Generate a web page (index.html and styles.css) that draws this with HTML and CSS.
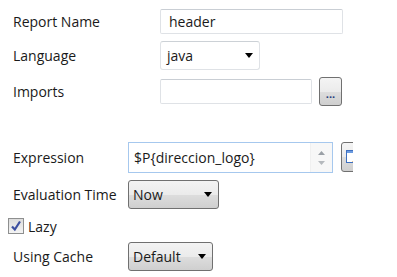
FILE: index.html
```html
<html>
<head>
  <link rel="stylesheet" href="styles.css">
</head>
<body>
  <div id="panel">
    <div class="group" id="report-group">
      <div class="row row-text">
        <span class="label">Report Name</span>
        <div class="text-box name-box">header</div>
      </div>
      <div class="row row-combo">
        <span class="label">Language</span>
        <div class="combo white-combo lang-combo"><span>java</span><span class="arrow"></span></div>
      </div>
      <div class="row row-combo">
        <span class="label">Imports</span>
        <div class="text-box imports-box"></div>
        <div class="dots-button">...</div>
      </div>
    </div>

    <div class="group" id="image-group">
      <div class="row row-expr">
        <span class="label">Expression</span>
        <div class="expr-box">
          <span class="expr-text">$P{direccion_logo}</span>
          <span class="spinner">
            <svg width="9" height="22" viewBox="0 0 9 22">
              <path d="M1 8 L4.5 4 L8 8 Z" fill="#9aa0a6"/>
              <path d="M1 14 L4.5 18 L8 14 Z" fill="#b5b9bd"/>
            </svg>
          </span>
        </div>
        <div class="clip">
          <div class="expr-button">
            <svg width="20" height="22" viewBox="0 0 20 22">
              <rect x="3.5" y="4.5" width="12" height="12" fill="#fff" stroke="#3d6fc0"/>
              <rect x="4" y="5" width="11" height="2" fill="#6c9be0"/>
              <path d="M9 15 L12 18 L14 15 Z" fill="#d9932c"/>
            </svg>
          </div>
        </div>
      </div>
      <div class="row row-combo">
        <span class="label">Evaluation Time</span>
        <div class="combo gray-combo now-combo"><span>Now</span><span class="arrow"></span></div>
      </div>
      <div class="row row-check">
        <span class="checkbox">
          <svg width="12" height="12" viewBox="0 0 12 12">
            <path d="M2 6.5 L4.8 9.5 L10 1.5" fill="none" stroke="#3c4fa0" stroke-width="2.2"/>
          </svg>
        </span>
        <span class="check-label">Lazy</span>
      </div>
      <div class="row row-combo">
        <span class="label">Using Cache</span>
        <div class="combo gray-combo cache-combo"><span>Default</span><span class="arrow"></span></div>
      </div>
    </div>
  </div>
</body>
</html>
```

FILE: styles.css
```css
body {
  margin: 0;
  padding: 0;
  background-color: #ffffff;
  font-family: "Open Sans", "Noto Sans", sans-serif;
  font-size: 14px;
  color: #1a1a1a;
  overflow: hidden;
}

#panel {
  width: 397px;
  height: 277px;
  overflow: hidden;
}

.group {
  display: flex;
  flex-direction: column;
  padding-left: 13px;
}

#report-group {
  padding-top: 9px;
  gap: 7px;
}

#report-group .label {
  width: 147px;
}

#image-group {
  margin-top: 36px;
  gap: 7px;
}

#image-group .label {
  width: 115px;
}

.row {
  display: flex;
  align-items: center;
}

.row-text {
  height: 25px;
}

.row-combo {
  height: 29px;
}

.row-expr {
  height: 31px;
}

.row-check {
  height: 18px;
  margin-top: 1px;
}

.label {
  flex-shrink: 0;
  white-space: nowrap;
}

.text-box {
  box-sizing: border-box;
  height: 25px;
  border: 1px solid #dfe2e6;
  border-top-color: #c9ced4;
  border-radius: 2px;
  padding: 0 8px;
  line-height: 23px;
}

.name-box {
  width: 183px;
}

.imports-box {
  width: 152px;
}

.dots-button {
  box-sizing: border-box;
  width: 23px;
  height: 29px;
  margin-left: 7px;
  border: 1px solid #707070;
  border-radius: 3px;
  background: linear-gradient(#f4f4f4, #ebebeb 50%, #dddddd 51%, #cfcfcf);
  color: #233a7a;
  font-size: 11px;
  font-weight: bold;
  line-height: 18px;
  text-align: center;
  padding-top: 7px;
}

.combo {
  box-sizing: border-box;
  height: 29px;
  display: flex;
  align-items: center;
  justify-content: space-between;
  padding: 0 5px 0 6px;
  border-radius: 3px;
}

.white-combo {
  border: 1px solid #dfe2e6;
  border-top-color: #ccd1d6;
  background-color: #ffffff;
}

.gray-combo {
  border: 1px solid #707070;
  background: linear-gradient(#f3f3f3, #ebebeb 50%, #dddddd 51%, #cfcfcf);
  padding-left: 4px;
}

.lang-combo {
  width: 100px;
}

.now-combo {
  width: 91px;
}

.cache-combo {
  width: 85px;
}

.arrow {
  width: 0;
  height: 0;
  border-left: 4px solid transparent;
  border-right: 4px solid transparent;
  border-top: 5px solid #000000;
  margin-right: 1px;
}

.expr-box {
  box-sizing: border-box;
  width: 205px;
  height: 31px;
  display: flex;
  align-items: center;
  justify-content: space-between;
  border: 1px solid #a6c8ee;
  padding-left: 5px;
}

.spinner {
  display: flex;
  align-items: center;
  height: 29px;
  width: 21px;
  justify-content: center;
  border-left: 1px solid #f0f0f0;
  background-color: #f7f7f7;
}

.clip {
  width: 12px;
  height: 31px;
  margin-left: 8px;
  overflow: hidden;
}

.expr-button {
  box-sizing: border-box;
  width: 26px;
  height: 30px;
  border: 1px solid #707070;
  border-radius: 3px;
  background: linear-gradient(#f4f4f4, #ebebeb 50%, #dddddd 51%, #cfcfcf);
  padding: 3px 0 0 1px;
}

.checkbox {
  box-sizing: border-box;
  width: 16px;
  height: 16px;
  margin-left: -5px;
  border: 1px solid #8e8f8f;
  background: linear-gradient(#dcdcdc, #f4f4f4);
  display: flex;
  align-items: center;
  justify-content: center;
}

.check-label {
  margin-left: 4px;
}
```
